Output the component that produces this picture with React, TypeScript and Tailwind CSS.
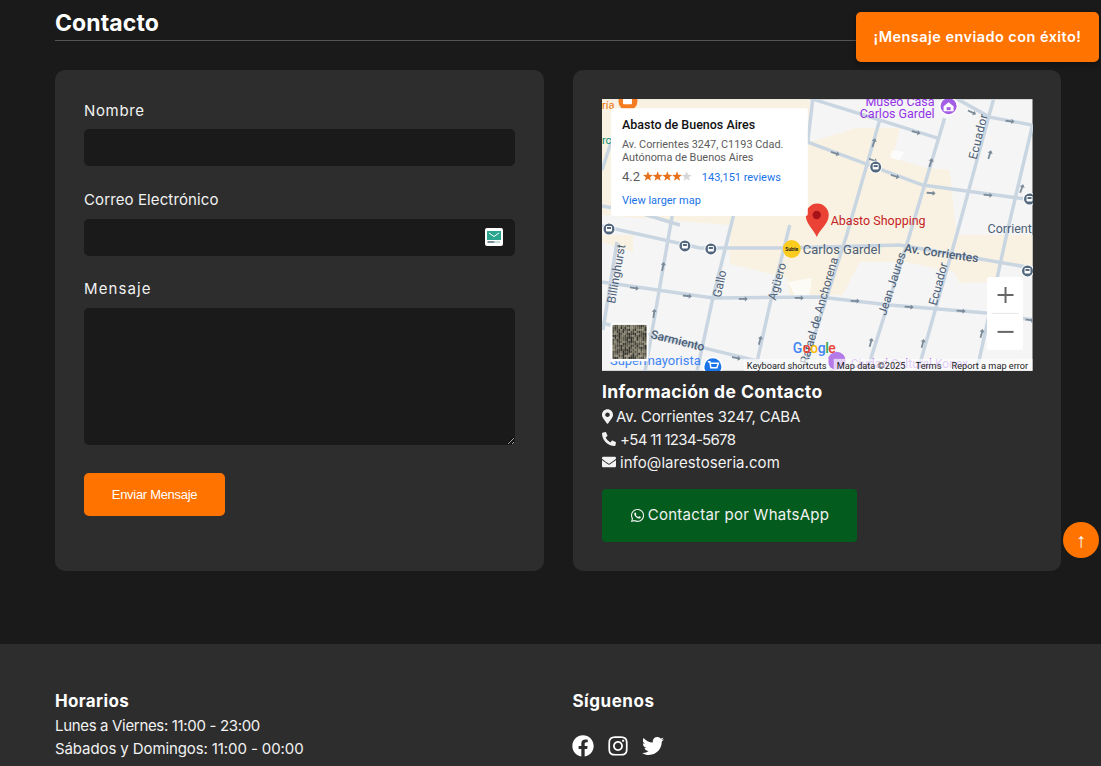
import React from "react";
import { FaMapMarkerAlt, FaPhoneAlt, FaEnvelope, FaWhatsapp, FaFacebook, FaInstagram, FaTwitter } from "react-icons/fa";

const roads = [
  "M813 99 L938 138", "M813 99 L808 142", "M808 142 L923 185 L1033 200",
  "M880 120 L847 235 L803 372", "M945 118 L910 235 L867 372", "M994 99 L957 235 L918 372",
  "M1033 125 L1007 235 L977 372", "M958 99 L990 117 L1033 125",
  "M602 226 L700 248 L783 248 L900 245 L1033 268",
  "M602 282 L713 298 L820 297 L890 305 L987 313 L1033 320",
  "M740 190 L713 298 L697 372", "M675 200 L655 315 L645 372", "M617 242 L603 330",
  "M790 225 L770 305 L755 372", "M602 323 L753 360 L800 372",
  "M625 99 L602 170", "M602 206 L640 213 L680 225",
];

const arrows: [number, number, number][] = [
  [916, 132, 16], [873, 160, 20], [835, 153, 18], [895, 176, 18], [931, 193, 4], [988, 195, 5],
  [1022, 189, -70], [874, 143, -72], [931, 163, -72], [990, 155, -72], [972, 112, 25], [1010, 121, 8],
  [634, 288, 8], [687, 296, 6], [743, 299, 0], [799, 298, 0], [663, 267, -78], [654, 314, -82],
  [855, 301, 2], [909, 307, 5], [961, 311, 5], [871, 343, -75], [923, 344, -75], [982, 334, -75],
  [1030, 320, 8], [736, 358, 12], [760, 341, -75],
];

const busStops: [number, number][] = [[876, 167], [1030, 199], [609, 229], [685, 246], [711, 249], [1028, 271]];

function BusStop({ x, y }: { x: number; y: number }) {
  return (
    <g transform={`translate(${x} ${y})`}>
      <circle r="6.5" fill="#ffffff" opacity="0.85" />
      <circle r="5.5" fill="#53677f" />
      <rect x="-3" y="-3" width="6" height="5.5" rx="1" fill="#ffffff" />
      <rect x="-2" y="-2" width="4" height="2" fill="#53677f" />
    </g>
  );
}

function satelliteCells() {
  const out: React.ReactElement[] = [];
  const palette = ["#4d4a3e", "#6f6a58", "#3b3a30", "#8a8672", "#5c5848", "#2f2e27", "#77735f", "#54503f", "#948f7b"];
  let seed = 12345;
  for (let r = 0; r < 17; r++) {
    for (let c = 0; c < 17; c++) {
      seed = (seed * 1103515245 + 12345) & 0x7fffffff;
      const idx = (seed >> 16) % palette.length;
      out.push(<rect key={`${r}-${c}`} x={612.5 + c * 2} y={325 + r * 2} width="2.1" height="2.1" fill={palette[idx]} />);
    }
  }
  return out;
}

function starPoints(cx: number, cy: number, R: number) {
  const pts: string[] = [];
  for (let i = 0; i < 10; i++) {
    const rad = i % 2 === 0 ? R : R * 0.42;
    const a = -Math.PI / 2 + (i * Math.PI) / 5;
    pts.push(`${(cx + rad * Math.cos(a)).toFixed(2)},${(cy + rad * Math.sin(a)).toFixed(2)}`);
  }
  return pts.join(" ");
}

function MapPicture() {
  const roboto = "Roboto, sans-serif";
  return (
    <svg viewBox="602 99 431 272" className="block w-[430.5px] h-[272px]" fontFamily={roboto}>
      <rect x="602" y="99" width="431" height="272" fill="#f5f5f5" />
      <g fill="#f9f2e2">
        <polygon points="602,99 810,99 810,225 730,225 602,215" />
        <polygon points="857,128 900,128 893,158 927,168 950,170 957,235 1033,235 1033,268 1000,265 996,282 960,283 955,272 905,262 860,262 843,295 790,295 787,278 730,264 730,220 800,145" />
        <polygon points="602,235 633,235 633,252 602,242" />
      </g>
      <g fill="#ffffff" opacity="0.7">
        <polygon points="892,150 905,152 900,160 890,158" />
        <polygon points="788,282 812,278 810,295 795,295" />
      </g>
      <g fill="none" stroke="#c9d6e2" strokeWidth="3.5">
        {roads.map((d) => <path key={d} d={d} />)}
      </g>
      <g fill="#7b8a99">
        {arrows.map(([x, y, a], i) => (
          <g key={i} transform={`translate(${x} ${y}) rotate(${a})`}>
            <rect x="-4" y="-0.9" width="7" height="1.8" />
            <polygon points="2,-2.6 5,0 2,2.6" />
          </g>
        ))}
      </g>

      <text x="602" y="109" fontSize="11" fill="#e8710a">ría</text>
      <text x="602" y="144" fontSize="11" fill="#0f8f6b">rc</text>
      <circle cx="628" cy="101" r="9.5" fill="#f57c20" />
      <rect x="623" y="98" width="9" height="6" rx="1" fill="#ffffff" />

      <g fontSize="12.5" fill="#9334e6" textAnchor="end">
        <text x="935" y="106">Museo Casa</text>
        <text x="935" y="118">Carlos Gardel</text>
      </g>
      <circle cx="949" cy="106" r="9.5" fill="#ffffff" opacity="0.9" />
      <circle cx="949" cy="106" r="8" fill="#a45ee5" />
      <path d="M944 106 L949 102 L954 106 V111 H944 Z" fill="#ffffff" />
      <rect x="947" y="107" width="4" height="3" fill="#a45ee5" />

      <g fontSize="12" fill="#4d5f76">
        <text transform="translate(977 160) rotate(-76)" letterSpacing="0.4">Ecuador</text>
        <text x="988" y="233" fontSize="12.5">Corrient</text>
        <text transform="translate(904 252) rotate(8)" fontWeight="500" fontSize="12">Av. Corrientes</text>
        <text x="803" y="254" fontSize="13">Carlos Gardel</text>
        <text transform="translate(615 304) rotate(-80)">Billinghurst</text>
        <text transform="translate(721 298) rotate(-78)">Gallo</text>
        <text transform="translate(776 301) rotate(-74)">Agüero</text>
        <text transform="translate(808 365) rotate(-74)">Rafael de Anchorena</text>
        <text transform="translate(886 316) rotate(-72)">Jean Jaures</text>
        <text transform="translate(937 306) rotate(-75)">Ecuador</text>
        <text transform="translate(650 338) rotate(14)" fontWeight="500">Sarmiento</text>
      </g>

      {busStops.map(([x, y]) => <BusStop key={`${x}-${y}`} x={x} y={y} />)}

      <circle cx="792" cy="249" r="9" fill="#fbcb20" />
      <text x="792" y="251" fontSize="5" fontWeight="700" textAnchor="middle" fill="#222">Subte</text>

      <path d="M817 237 C813 228 806 224 806 215 A11.5 11.5 0 0 1 829 215 C829 224 821 228 817 237 Z" fill="#ea4335" />
      <circle cx="817" cy="215" r="4.2" fill="#a6141a" />
      <text x="831" y="225" fontSize="12.5" fill="#c5221f">Abasto Shopping</text>

      <text x="610" y="365" fontSize="13" fill="#4285f4">Supermayorista</text>
      <circle cx="713" cy="367" r="10" fill="#ffffff" />
      <circle cx="713" cy="367" r="8.5" fill="#1a73e8" />
      <path d="M708 362 H710 L711 368 H717 L718.5 363.5 H711" fill="none" stroke="#ffffff" strokeWidth="1.5" />

      <text x="851" y="368" fontSize="12" fill="#a968ea">Ciudad Cultural Konex</text>
      <circle cx="837" cy="361" r="9" fill="#b47be8" />

      <g fontSize="14" fontWeight="500">
        <text x="793" y="353" fill="#4285f4">G</text>
        <text x="803" y="353" fill="#ea4335">o</text>
        <text x="810.5" y="353" fill="#fbbc05">o</text>
        <text x="818" y="353" fill="#4285f4">g</text>
        <text x="825.5" y="353" fill="#34a853">l</text>
        <text x="828.5" y="353" fill="#ea4335">e</text>
      </g>

      <rect x="610.5" y="323" width="38" height="38.5" rx="2" fill="#ffffff" />
      {satelliteCells()}

      <g fill="#ffffff" opacity="0.65">
        <rect x="744" y="359" width="85" height="12" />
        <rect x="834" y="359" width="199" height="12" />
      </g>
      <g fontSize="9.2" fill="#222222">
        <text x="747" y="369">Keyboard shortcuts</text>
        <text x="837" y="369">Map data ©2025</text>
        <text x="916" y="369">Terms</text>
        <text x="952" y="369">Report a map error</text>
      </g>

      <rect x="987.5" y="277" width="36" height="73" rx="1.5" fill="#ffffff" />
      <rect x="992" y="313" width="27" height="1" fill="#e6e6e6" />
      <path d="M998 295 H1014 M1006 287 V303" stroke="#666666" strokeWidth="2" />
      <path d="M998 332 H1014" stroke="#666666" strokeWidth="2" />

      <rect x="611" y="108" width="197" height="108" rx="2" fill="#ffffff" />
      <text x="622" y="129" fontSize="12.5" fontWeight="500" fill="#111111">Abasto de Buenos Aires</text>
      <g fontSize="10.9" fill="#5b5b5b">
        <text x="622" y="148">Av. Corrientes 3247, C1193 Cdad.</text>
        <text x="622" y="161">Autónoma de Buenos Aires</text>
      </g>
      <text x="622" y="181" fontSize="13" fill="#5b5b5b">4.2</text>
      {[0, 1, 2, 3, 4].map((i) => (
        <polygon key={i} points={starPoints(648 + i * 9.7, 176.5, 5.2)} fill={i < 4 ? "#e7711b" : "#d6d6d6"} />
      ))}
      <text x="702" y="181" fontSize="11" fill="#1a73e8">143,151 reviews</text>
      <text x="622" y="204" fontSize="11" fill="#1a73e8">View larger map</text>
    </svg>
  );
}

function Field({ label, track, children }: { label: string; track: string; children: React.ReactNode }) {
  return (
    <div>
      <label className={`block text-[15px] leading-[23px] mb-[7.6px] text-[#f2f2f2] ${track}`}>{label}</label>
      {children}
    </div>
  );
}

const fieldClass = "block w-full bg-[#1a1a1a] rounded-[5px] outline-none";

export default function App() {
  return (
    <div
      className="relative h-[766px] w-[1101px] overflow-hidden bg-[#1a1a1a] text-white"
      style={{ fontFamily: "Inter, 'Open Sans', sans-serif" }}
    >
      <main className="pl-[55px] pr-[40px] pt-[9px]">
        <h2 className="text-[23px] leading-[29px] font-bold pb-[2px] border-b border-[#555555] tracking-[0.1px]">Contacto</h2>
        <div className="grid grid-cols-[489px_488px] gap-[29px] mt-[29px]">
          <section className="h-[501px] bg-[#2d2d2d] rounded-[10px] pt-[28.8px] pl-[29px] pr-[29.5px]">
            <div className="flex flex-col gap-[21.6px]">
              <Field label="Nombre" track="tracking-[0.65px]"><input className={`${fieldClass} h-[37px]`} /></Field>
              <Field label="Correo Electrónico" track="tracking-[0.11px]">
                <div className="relative">
                  <input className={`${fieldClass} h-[37px]`} />
                  <svg viewBox="0 0 18 18" className="absolute right-[12px] top-[9px] w-[18px] h-[18px]">
                    <rect width="18" height="18" rx="2" fill="#ffffff" />
                    <rect x="2" y="3" width="14" height="9" fill="#2ba58e" />
                    <path d="M4 5 L9 8.5 L14 5" fill="none" stroke="#ffffff" strokeWidth="1" />
                    <rect x="2.5" y="13" width="7" height="2" fill="#7d8f96" />
                    <rect x="10" y="13" width="5" height="2" fill="#bfe3da" />
                  </svg>
                </div>
              </Field>
              <Field label="Mensaje" track="tracking-[1.1px]"><textarea className={`${fieldClass} h-[137px]`} /></Field>
            </div>
            <button
              className="mt-[28.2px] w-[141px] h-[43px] bg-[#ff7300] rounded-[5px] text-[13px] tracking-[-0.3px] text-white"
              style={{ fontFamily: "'Liberation Sans', sans-serif" }}
            >
              Enviar Mensaje
            </button>
          </section>

          <section className="h-[501px] bg-[#2d2d2d] rounded-[10px] pt-[28.8px] pl-[29px]">
            <MapPicture />
            <h3 className="text-[17.5px] leading-[23px] font-bold mt-[9px] tracking-[0.4px]">Información de Contacto</h3>
            <ul className="text-[15px] leading-[23px] text-[#f2f2f2] mt-[2px]">
              <li className="flex items-center gap-[3px] tracking-[-0.17px]"><FaMapMarkerAlt size={12} className="w-[11px] h-[15px]" />Av. Corrientes 3247, CABA</li>
              <li className="flex items-center gap-[4px] tracking-[-0.7px]"><FaPhoneAlt size={14} />+54 11 1234-5678</li>
              <li className="flex items-center gap-[4px] tracking-[0.06px]"><FaEnvelope size={14} />info@larestoseria.com</li>
            </ul>
            <a className="mt-[15px] flex items-center justify-center gap-[3px] w-[255px] h-[53px] bg-[#035c1e] rounded-[4px] text-[15px] tracking-[0.27px] text-[#f2f2f2]">
              <FaWhatsapp size={15} />Contactar por WhatsApp
            </a>
          </section>
        </div>
      </main>

      <footer className="mt-[73px] h-[200px] bg-[#2d2d2d] px-[55px] pt-[46px]">
        <div className="grid grid-cols-[517.4px_1fr]">
          <div>
            <h4 className="text-[17px] leading-[23px] font-bold tracking-[0.35px]">Horarios</h4>
            <p className="text-[15px] leading-[23px] text-[#f2f2f2] tracking-[-0.33px] mt-[1px]">Lunes a Viernes: 11:00 - 23:00</p>
            <p className="text-[15px] leading-[23px] text-[#f2f2f2] tracking-[-0.1px]">Sábados y Domingos: 11:00 - 00:00</p>
          </div>
          <div>
            <h4 className="text-[17px] leading-[23px] font-bold tracking-[0.55px]">Síguenos</h4>
            <div className="flex items-center gap-[13px] mt-[22px]">
              <FaFacebook size={22} />
              <FaInstagram size={22} />
              <FaTwitter size={22} />
            </div>
          </div>
        </div>
      </footer>

      <div className="absolute left-[856px] top-[12px] w-[243px] h-[50px] flex items-center justify-center bg-[#ff7300] rounded-[5px] text-[14.5px] font-semibold tracking-[0.45px] shadow-[0_2px_6px_rgba(0,0,0,0.4)]">
        ¡Mensaje enviado con éxito!
      </div>
      <div className="absolute left-[1063px] top-[522px] w-[36px] h-[36px] rounded-full bg-[#ff7300] flex items-center justify-center text-[20px] font-['Liberation_Sans']">↑</div>
    </div>
  );
}
